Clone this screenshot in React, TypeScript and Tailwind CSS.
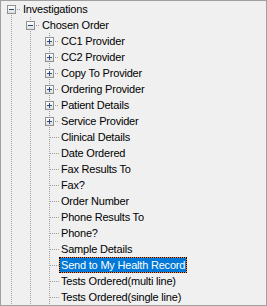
import React from 'react';

type Box = 'plus' | 'minus' | null;

interface Node {
  label: string;
  level: number;
  box: Box;
  first?: boolean;
  selected?: boolean;
}

const nodes: Node[] = [
  { label: 'Investigations', level: 0, box: 'minus', first: true },
  { label: 'Chosen Order', level: 1, box: 'minus' },
  { label: 'CC1 Provider', level: 2, box: 'plus' },
  { label: 'CC2 Provider', level: 2, box: 'plus' },
  { label: 'Copy To Provider', level: 2, box: 'plus' },
  { label: 'Ordering Provider', level: 2, box: 'plus' },
  { label: 'Patient Details', level: 2, box: 'plus' },
  { label: 'Service Provider', level: 2, box: 'plus' },
  { label: 'Clinical Details', level: 2, box: null },
  { label: 'Date Ordered', level: 2, box: null },
  { label: 'Fax Results To', level: 2, box: null },
  { label: 'Fax?', level: 2, box: null },
  { label: 'Order Number', level: 2, box: null },
  { label: 'Phone Results To', level: 2, box: null },
  { label: 'Phone?', level: 2, box: null },
  { label: 'Sample Details', level: 2, box: null },
  { label: 'Send to My Health Record', level: 2, box: null, selected: true },
  { label: 'Tests Ordered(multi line)', level: 2, box: null },
  { label: 'Tests Ordered(single line)', level: 2, box: null },
];

const LINE = '#a0a0a0';

// one 19px indent cell; the tree lines are a drawing
const Cell: React.FC<{ own?: boolean; box?: Box; first?: boolean }> = ({ own, box, first }) => (
  <svg width="19" height="16" className="shrink-0" shapeRendering="crispEdges">
    {!own && <line x1="9.5" y1="0" x2="9.5" y2="16" stroke={LINE} strokeDasharray="1 1" />}
    {own && (
      <>
        {!first && <line x1="9.5" y1="0" x2="9.5" y2="8" stroke={LINE} strokeDasharray="1 1" />}
        <line x1="9.5" y1="8" x2="9.5" y2="16" stroke={LINE} strokeDasharray="1 1" />
        <line x1={box ? 15 : 10} y1="8.5" x2="19" y2="8.5" stroke={LINE} strokeDasharray="1 1" />
        {box && (
          <>
            <defs>
              <linearGradient id="bx" x1="0" y1="0" x2="0" y2="1">
                <stop offset="0" stopColor="#ffffff" />
                <stop offset="1" stopColor="#dcdcdc" />
              </linearGradient>
            </defs>
            <rect x="5.5" y="4.5" width="8" height="8" fill="url(#bx)" stroke="#919191" />
            <line x1="7" y1="8.5" x2="12" y2="8.5" stroke="#2b4a86" />
            {box === 'plus' && <line x1="9.5" y1="6" x2="9.5" y2="11" stroke="#2b4a86" />}
          </>
        )}
      </>
    )}
  </svg>
);

export default function App() {
  return (
    <div className="w-[267px] h-[306px] overflow-hidden border border-[#a0a0a0] bg-[#f0f0f0] pl-px font-['Liberation_Sans',Arial,sans-serif] text-[11px] tracking-[-0.2px] text-black">
      <div className="flex flex-col">
        {nodes.map((n) => (
          <div key={n.label} className="flex h-4 items-start">
            {Array.from({ length: n.level }).map((_, i) => (
              <Cell key={i} />
            ))}
            <Cell own box={n.box} first={n.first} />
            <span className={n.selected ? 'bg-[#ff8728]' : ''}>
              <span
                className={
                  n.selected
                    ? 'block h-4 whitespace-nowrap border border-dotted border-black bg-[#0078d7] bg-clip-padding px-px leading-[15px] text-white'
                    : 'block h-4 whitespace-nowrap border border-transparent px-px leading-[15px]'
                }
              >
                {n.label}
              </span>
            </span>
          </div>
        ))}
      </div>
    </div>
  );
}
